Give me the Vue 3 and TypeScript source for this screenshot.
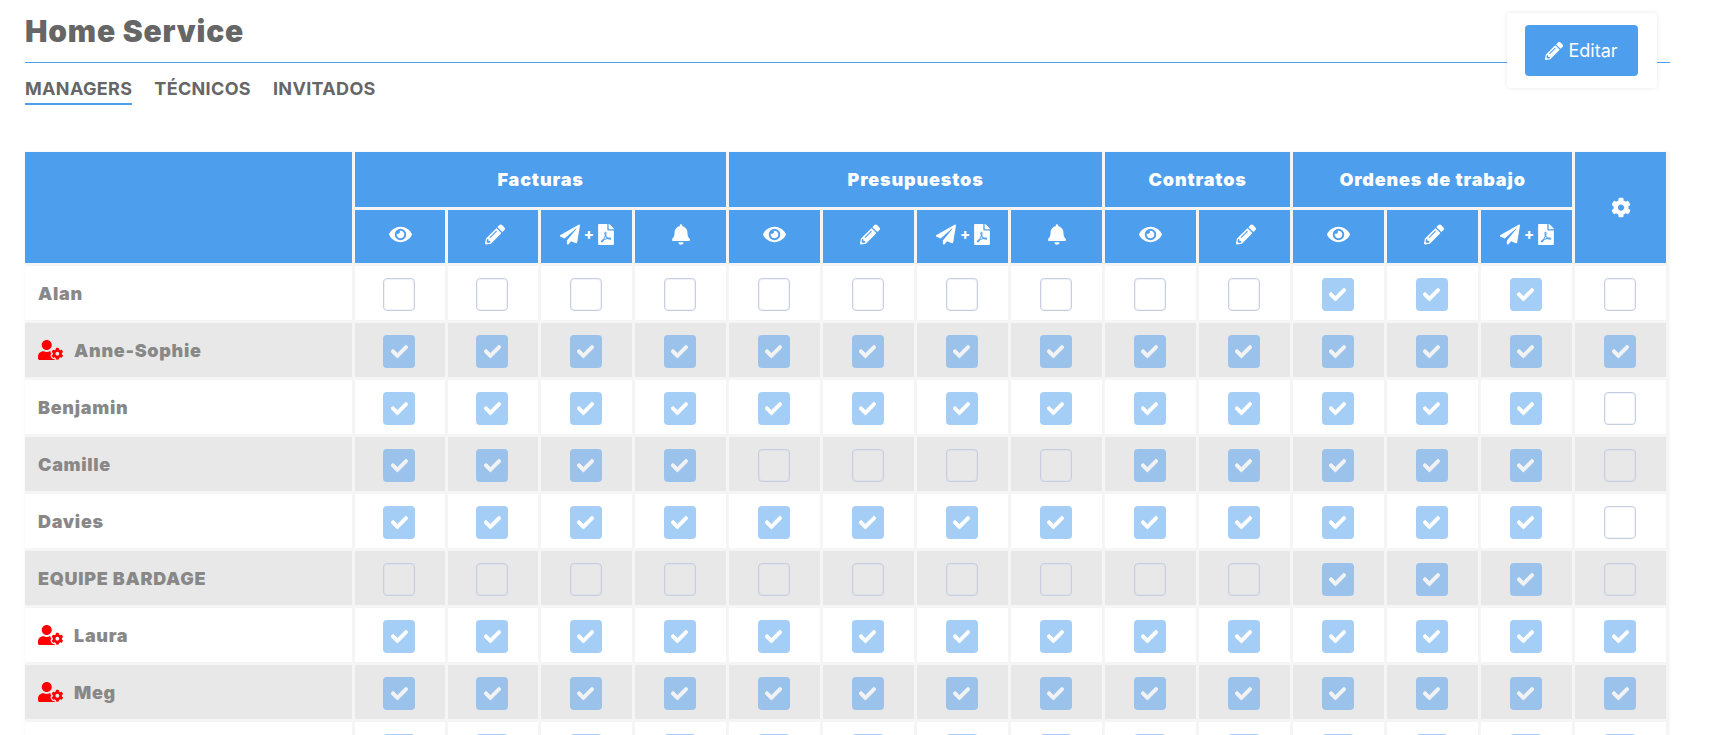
<script setup lang="ts">
const icons = {
  eye: 'M572.52 241.4C518.29 135.59 410.93 64 288 64S57.68 135.64 3.48 241.41a32.35 32.35 0 0 0 0 29.19C57.71 376.41 165.07 448 288 448s230.32-71.64 284.52-177.41a32.35 32.35 0 0 0 0-29.19zM288 400a144 144 0 1 1 144-144 143.93 143.93 0 0 1-144 144zm0-240a95.31 95.31 0 0 0-25.31 3.79 47.85 47.85 0 0 1-66.9 66.9A95.78 95.78 0 1 0 288 160z',
  pencil: 'M497.9 142.1l-46.1 46.1c-4.7 4.7-12.3 4.7-17 0l-111-111c-4.7-4.7-4.7-12.3 0-17l46.1-46.1c18.7-18.7 49.1-18.7 67.9 0l60.1 60.1c18.8 18.7 18.8 49.1 0 67.9zM284.2 99.8L21.6 362.4.4 483.9c-2.9 16.4 11.4 30.6 27.8 27.8l121.5-21.3 262.6-262.6c4.7-4.7 4.7-12.3 0-17l-111-111c-4.8-4.7-12.4-4.7-17.1 0zM124.1 339.9c-5.5-5.5-5.5-14.3 0-19.8l154-154c5.5-5.5 14.3-5.5 19.8 0s5.5 14.3 0 19.8l-154 154c-5.5 5.5-14.3 5.5-19.8 0zM88 424h48v36.3l-64.5 11.3-31.1-31.1L51.7 376H88v48z',
  plane: 'M476 3.2L12.5 270.6c-18.1 10.4-15.8 35.6 2.2 43.2L121 358.4l287.3-253.2c5.5-4.9 13.3 2.6 8.6 8.3L176 407v80.5c0 23.6 28.5 32.9 42.5 15.8L282 426l124.6 52.2c14.2 6 30.4-2.9 33-18.2l72-432C515 7.8 493.3-6.8 476 3.2z',
  pdf: 'M181.9 256.1c-5-16-4.9-46.9-2-46.9 8.4 0 7.6 36.9 2 46.9zm-1.7 47.2c-7.7 20.2-17.3 43.3-28.4 62.7 18.3-7 39-17.2 62.9-21.9-12.7-9.6-24.9-23.4-34.5-40.8zM86.1 428.1c0 .8 13.2-5.4 34.9-40.2-6.7 6.3-29.1 24.5-34.9 40.2zM248 160h136v328c0 13.3-10.7 24-24 24H24c-13.3 0-24-10.7-24-24V24C0 10.7 10.7 0 24 0h200v136c0 13.2 10.8 24 24 24zm-8 171.8c-20-12.2-33.3-29-42.7-53.8 4.5-18.5 11.6-46.6 6.2-64.2-4.7-29.4-42.4-26.5-47.8-6.8-5 18.3-.4 44.1 8.1 77-11.6 27.6-28.7 64.6-40.8 85.8-.1 0-.1.1-.2.1-27.1 13.9-73.6 44.5-54.5 68 5.6 6.9 16 10 21.5 10 17.9 0 35.7-18 61.1-61.8 25.8-8.5 54.1-19.1 79-23.2 21.7 11.8 47.1 19.5 64 19.5 29.2 0 31.2-32 19.7-43.4-13.9-13.6-54.3-9.7-73.6-7.2zM377 105L279 7c-4.5-4.5-10.6-7-17-7h-6v128h128v-6.1c0-6.3-2.5-12.4-7-16.9zm-74.1 255.3c4.1-2.7-2.5-11.9-42.8-9 37.1 15.8 42.8 9 42.8 9z',
  bell: 'M224 512c35.32 0 63.97-28.65 63.97-64H160.03c0 35.35 28.65 64 63.97 64zm215.39-149.71c-19.32-20.76-55.47-51.99-55.47-154.29 0-77.7-54.48-139.9-127.94-155.16V32c0-17.67-14.32-32-31.98-32s-31.98 14.33-31.98 32v20.84C118.56 68.1 64.08 130.3 64.08 208c0 102.3-36.15 133.53-55.47 154.29-6 6.45-8.66 14.16-8.61 21.71.11 16.4 12.98 32 32.1 32h383.8c19.12 0 32-15.6 32.1-32 .05-7.55-2.61-15.27-8.61-21.71z',
  cog: 'M487.4 315.7l-42.6-24.6c4.3-23.2 4.3-47 0-70.2l42.6-24.6c4.9-2.8 7.1-8.6 5.5-14-11.1-35.6-30-67.8-54.7-94.6-3.8-4.1-10-5.1-14.8-2.3L380.8 110c-17.9-15.4-38.5-27.3-60.8-35.1V25.8c0-5.6-3.9-10.5-9.4-11.7-36.7-8.2-74.3-7.8-109.2 0-5.5 1.2-9.4 6.1-9.4 11.7V75c-22.2 7.9-42.8 19.8-60.8 35.1L88.7 85.5c-4.9-2.8-11-1.9-14.8 2.3-24.7 26.7-43.6 58.9-54.7 94.6-1.7 5.4.6 11.2 5.5 14L67.3 221c-4.3 23.2-4.3 47 0 70.2l-42.6 24.6c-4.9 2.8-7.1 8.6-5.5 14 11.1 35.6 30 67.8 54.7 94.6 3.8 4.1 10 5.1 14.8 2.3l42.6-24.6c17.9 15.4 38.5 27.3 60.8 35.1v49.2c0 5.6 3.9 10.5 9.4 11.7 36.7 8.2 74.3 7.8 109.2 0 5.5-1.2 9.4-6.1 9.4-11.7v-49.2c22.2-7.9 42.8-19.8 60.8-35.1l42.6 24.6c4.9 2.8 11 1.9 14.8-2.3 24.7-26.7 43.6-58.9 54.7-94.6 1.5-5.5-.7-11.3-5.6-14.1zM256 336c-44.1 0-80-35.9-80-80s35.9-80 80-80 80 35.9 80 80-35.9 80-80 80z',
  userCog: 'M610.5 373.3c2.6-14.1 2.6-28.5 0-42.6l25.8-14.9c3-1.7 4.3-5.2 3.3-8.5-6.7-21.6-18.2-41.2-33.2-57.4-2.3-2.5-6-3.1-9-1.4l-25.8 14.9c-10.9-9.3-23.4-16.5-36.9-21.3v-29.8c0-3.4-2.4-6.4-5.7-7.1-22.3-5-45-4.8-66.2 0-3.3.7-5.7 3.7-5.7 7.1v29.8c-13.5 4.8-26 12-36.9 21.3l-25.8-14.9c-2.9-1.7-6.7-1.1-9 1.4-15 16.2-26.5 35.8-33.2 57.4-1 3.3.4 6.8 3.3 8.5l25.8 14.9c-2.6 14.1-2.6 28.5 0 42.6l-25.8 14.9c-3 1.7-4.3 5.2-3.3 8.5 6.7 21.6 18.2 41.1 33.2 57.4 2.3 2.5 6 3.1 9 1.4l25.8-14.9c10.9 9.3 23.4 16.5 36.9 21.3v29.8c0 3.4 2.4 6.4 5.7 7.1 22.3 5 45 4.8 66.2 0 3.3-.7 5.7-3.7 5.7-7.1v-29.8c13.5-4.8 26-12 36.9-21.3l25.8 14.9c2.9 1.7 6.7 1.1 9-1.4 15-16.2 26.5-35.8 33.2-57.4 1-3.3-.4-6.8-3.3-8.5l-25.8-14.9zM496 400.5c-26.8 0-48.5-21.8-48.5-48.5s21.8-48.5 48.5-48.5 48.5 21.8 48.5 48.5-21.7 48.5-48.5 48.5zM224 256c70.7 0 128-57.3 128-128S294.7 0 224 0 96 57.3 96 128s57.3 128 128 128zm201.2 226.5c-2.3-1.2-4.6-2.6-6.8-3.9l-7.9 4.6c-6 3.4-12.8 5.3-19.6 5.3-10.9 0-21.4-4.6-28.9-12.6-18.3-19.8-32.3-43.9-40.2-69.6-5.5-17.7 1.9-36.4 17.9-45.7l7.9-4.6c-.1-2.6-.1-5.2 0-7.8l-7.9-4.6c-16-9.2-23.4-28-17.9-45.7.9-2.9 2.2-5.8 3.2-8.7-3.8-.3-7.5-1.2-11.4-1.2h-16.7c-22.2 10.2-46.9 16-72.9 16s-50.6-5.8-72.9-16h-16.7C60.2 288 0 348.2 0 422.4V464c0 26.5 21.5 48 48 48h352c10.1 0 19.5-3.2 27.2-8.5-1.2-3.8-2-7.7-2-11.8v-9.2z',
  check: 'M173.898 439.404l-166.4-166.4c-9.997-9.997-9.997-26.206 0-36.204l36.203-36.204c9.997-9.998 26.207-9.998 36.204 0L192 312.69 432.095 72.596c9.997-9.997 26.207-9.997 36.204 0l36.203 36.204c9.997 9.997 9.997 26.206 0 36.204l-294.4 294.401c-9.998 9.997-26.207 9.997-36.204-.001z',
}

type Action = 'view' | 'edit' | 'send' | 'notify'

interface Row {
  name: string
  admin: boolean
  access: string
}

const groups = [
  { title: 'Facturas', span: 4 },
  { title: 'Presupuestos', span: 4 },
  { title: 'Contratos', span: 2 },
  { title: 'Ordenes de trabajo', span: 3 },
]

const actions: Action[] = [
  'view', 'edit', 'send', 'notify',
  'view', 'edit', 'send', 'notify',
  'view', 'edit',
  'view', 'edit', 'send',
]

const rows: Row[] = [
  { name: 'Alan', admin: false, access: '00000000001110' },
  { name: 'Anne-Sophie', admin: true, access: '11111111111111' },
  { name: 'Benjamin', admin: false, access: '11111111111110' },
  { name: 'Camille', admin: false, access: '11110000111110' },
  { name: 'Davies', admin: false, access: '11111111111110' },
  { name: 'EQUIPE BARDAGE', admin: false, access: '00000000001110' },
  { name: 'Laura', admin: true, access: '11111111111111' },
  { name: 'Meg', admin: true, access: '11111111111111' },
  { name: '', admin: false, access: '11111111111111' },
]

const tabs = ['MANAGERS', 'TÉCNICOS', 'INVITADOS']
</script>

<template>
  <div class="page">
    <header class="head">
      <h1 class="title">Home Service</h1>
      <nav class="tabs">
        <a v-for="(tab, i) in tabs" :key="tab" class="tab" :class="{ active: i === 0 }">{{ tab }}</a>
      </nav>
      <div class="edit-card">
        <button class="edit-btn" type="button">
          <svg class="edit-icon" viewBox="0 0 512 512"><path :d="icons.pencil" /></svg>
          <span>Editar</span>
        </button>
      </div>
    </header>

    <table class="grid">
      <colgroup>
        <col class="col-name" />
        <col v-for="n in 14" :key="n" :class="n <= 2 ? 'col-narrow' : 'col-perm'" />
      </colgroup>
      <thead>
        <tr class="head-top">
          <th rowspan="2"></th>
          <th v-for="g in groups" :key="g.title" :colspan="g.span" class="group">{{ g.title }}</th>
          <th rowspan="2" class="gear">
            <svg class="ico" viewBox="0 0 512 512"><path :d="icons.cog" /></svg>
          </th>
        </tr>
        <tr class="head-sub">
          <th v-for="(a, i) in actions" :key="i">
            <svg v-if="a === 'view'" class="ico eye" viewBox="0 0 576 512"><path :d="icons.eye" /></svg>
            <svg v-else-if="a === 'edit'" class="ico pen" viewBox="0 0 512 512"><path :d="icons.pencil" /></svg>
            <span v-else-if="a === 'send'" class="send">
              <svg class="ico" viewBox="0 0 512 512"><path :d="icons.plane" /></svg>
              <span class="plus">+</span>
              <svg class="ico pdf" viewBox="0 0 384 512"><path :d="icons.pdf" /></svg>
            </span>
            <svg v-else class="ico bell" viewBox="0 0 448 512"><path :d="icons.bell" /></svg>
          </th>
        </tr>
      </thead>
      <tbody>
        <tr v-for="(row, r) in rows" :key="r" :class="{ odd: r % 2 === 1 }">
          <td class="name">
            <span class="name-in">
              <svg v-if="row.admin" class="admin" viewBox="0 0 640 512"><path :d="icons.userCog" /></svg>
              <span>{{ row.name }}</span>
            </span>
          </td>
          <td v-for="(flag, c) in row.access.split('')" :key="c" class="perm">
            <span class="box" :class="{ on: flag === '1' }">
              <svg v-if="flag === '1'" class="tick" viewBox="0 0 512 512"><path :d="icons.check" /></svg>
            </span>
          </td>
        </tr>
      </tbody>
    </table>
  </div>
</template>

<style>
html, body {
  overflow: hidden;
  background: #fff;
}
</style>

<style scoped>
.page {
  padding: 0 40px 0 25px;
  font-family: Inter, "Liberation Sans", sans-serif;
}
.head {
  position: relative;
  height: 152px;
}
.title {
  margin: 0;
  height: 62px;
  border-bottom: 1px solid #4e9eee;
  line-height: 62px;
  font-size: 30px;
  font-weight: 900;
  letter-spacing: 0.8px;
  color: #666;
}
.tabs {
  display: flex;
  gap: 22px;
  margin-top: 16px;
}
.tab {
  padding-bottom: 4px;
  border-bottom: 2px solid transparent;
  line-height: 20px;
  font-size: 18px;
  font-weight: 700;
  letter-spacing: 0.33px;
  color: #666;
}
.tab.active {
  border-bottom-color: #4e9eee;
}
.edit-card {
  position: absolute;
  top: 13px;
  left: 1482px;
  box-sizing: border-box;
  width: 150px;
  height: 75px;
  padding: 12px 18px;
  background: #fff;
  border-radius: 3px;
  box-shadow: 0 0 4px rgba(0, 0, 0, 0.1);
}
.edit-btn {
  display: flex;
  align-items: center;
  justify-content: center;
  gap: 5px;
  width: 113px;
  height: 51px;
  padding: 0;
  border: 0;
  border-radius: 4px;
  background: #4e9eee;
  color: #fff;
  font-family: inherit;
  font-size: 18px;
}
.edit-icon {
  width: 18px;
  height: 18px;
  fill: #fff;
}
.grid {
  width: 1644px;
  table-layout: fixed;
  border-collapse: separate;
  border-spacing: 0;
  box-shadow: 0 0 3px rgba(0, 0, 0, 0.06);
}
.col-name {
  width: 330px;
}
.col-narrow {
  width: 93px;
}
.col-perm {
  width: 94px;
}
.grid th {
  padding: 0;
  background: #4e9eee;
  border-right: 3px solid #f5f5f5;
  border-bottom: 3px solid #f5f5f5;
  color: #fff;
  text-align: center;
  vertical-align: middle;
}
.head-top {
  height: 58px;
}
.head-sub {
  height: 56px;
}
.head-sub th {
  padding-bottom: 6px;
}
.grid th.gear {
  padding-bottom: 2px;
}
.group {
  font-size: 18px;
  font-weight: 900;
  letter-spacing: 0.85px;
}
.ico {
  display: inline-block;
  width: 20px;
  height: 21px;
  fill: #fff;
  vertical-align: middle;
}
.ico.eye {
  width: 23px;
}
.ico.pen {
  margin-left: 3px;
}
.ico.bell {
  width: 18px;
}
.ico.pdf {
  width: 16px;
}
.send {
  display: inline-flex;
  align-items: center;
  justify-content: center;
  gap: 4px;
  margin-left: 1px;
  vertical-align: middle;
}
.plus {
  font-size: 15px;
  font-weight: 800;
  letter-spacing: 0;
}
.grid td {
  padding: 0;
  background: #fff;
  border-right: 3px solid #f5f5f5;
  border-bottom: 3px solid #f5f5f5;
}
.grid tr.odd td {
  background: #e8e8e8;
}
.grid td.name {
  padding: 0 0 0 13px;
  color: #888;
  font-size: 18px;
  font-weight: 900;
  letter-spacing: 0.7px;
}
.name-in {
  display: flex;
  align-items: center;
  gap: 11px;
}
.admin {
  width: 25px;
  height: 20px;
  fill: #f00;
}
.grid td.perm {
  height: 42px;
  padding-top: 12px;
  line-height: 0;
  text-align: center;
  vertical-align: top;
}
.box {
  display: inline-block;
  box-sizing: border-box;
  width: 32px;
  height: 33px;
  margin-right: 2px;
  border: 1px solid #c6cfe2;
  border-radius: 4px;
  box-shadow: inset 0 0 0 1px rgba(198, 207, 226, 0.25);
  vertical-align: top;
}
.perm:last-child .box {
  margin-right: 1px;
}
.box.on {
  display: inline-flex;
  align-items: center;
  justify-content: center;
  border: 0;
  box-shadow: none;
  background: #4e9eee;
  opacity: 0.5;
}
.tick {
  width: 17px;
  height: 17px;
  fill: #fff;
  stroke: #fff;
  stroke-width: 24;
}
</style>
